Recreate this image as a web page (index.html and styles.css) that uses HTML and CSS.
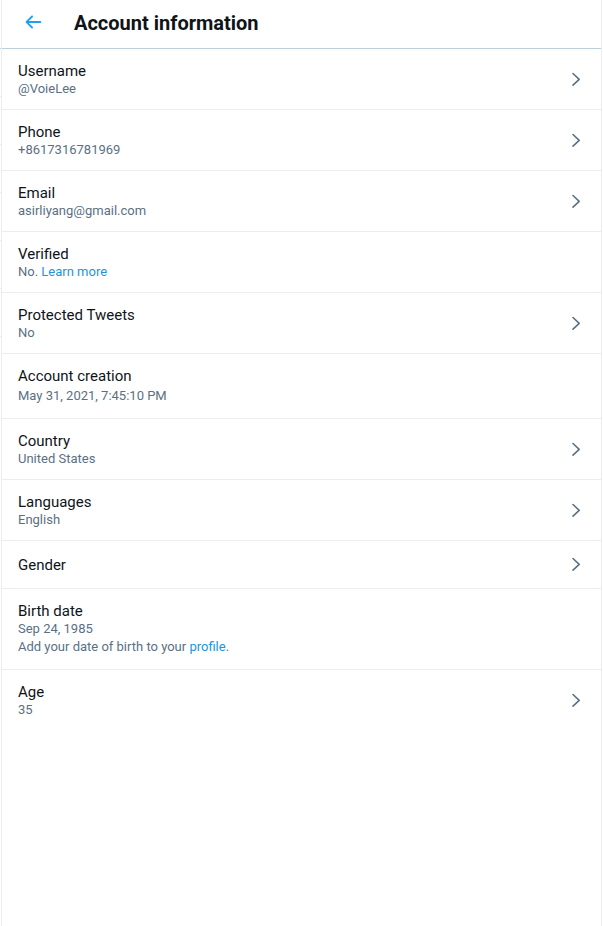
FILE: index.html
```html
<!DOCTYPE html>
<html lang="en">
<head>
<meta charset="utf-8">
<title>Account information</title>
<link rel="stylesheet" href="styles.css">
</head>
<body>
<svg class="defs" aria-hidden="true"><symbol id="chevron" viewBox="0 0 20 20"><path d="M8 3.5 14.2 9.3 8 15.1" fill="none" stroke="currentColor" stroke-width="1.6" stroke-linecap="round" stroke-linejoin="round"/></symbol></svg>
<div class="layout">
  <div class="edge"></div>
  <main class="panel">
    <header class="header">
      <button class="back" type="button" aria-label="Back"><svg viewBox="0 0 24 24" aria-hidden="true"><path d="M20 11H7.414l4.293-4.293c.39-.39.39-1.023 0-1.414s-1.023-.39-1.414 0l-6 6c-.39.39-.39 1.023 0 1.414l6 6c.195.195.45.293.707.293s.512-.098.707-.293c.39-.39.39-1.023 0-1.414L7.414 13H20c.553 0 1-.447 1-1s-.447-1-1-1z"/></svg></button>
      <h1 class="title">Account information</h1>
    </header>
    <a class="row" href="#username"><span class="text"><span class="label">Username</span><span class="value">@VoieLee</span></span><svg class="chevron"><use href="#chevron"/></svg></a>
    <a class="row" href="#phone"><span class="text"><span class="label">Phone</span><span class="value">+8617316781969</span></span><svg class="chevron"><use href="#chevron"/></svg></a>
    <a class="row" href="#email"><span class="text"><span class="label">Email</span><span class="value">asirliyang@gmail.com</span></span><svg class="chevron"><use href="#chevron"/></svg></a>
    <div class="row"><div class="text"><span class="label">Verified</span><span class="value">No. <a class="link" href="#verified">Learn more</a></span></div></div>
    <a class="row" href="#protected"><span class="text"><span class="label">Protected Tweets</span><span class="value">No</span></span><svg class="chevron"><use href="#chevron"/></svg></a>
    <div class="row"><div class="text spaced"><span class="label">Account creation</span><span class="value">May 31, 2021, 7:45:10 PM</span></div></div>
    <a class="row" href="#country"><span class="text"><span class="label">Country</span><span class="value">United States</span></span><svg class="chevron"><use href="#chevron"/></svg></a>
    <a class="row" href="#languages"><span class="text"><span class="label">Languages</span><span class="value">English</span></span><svg class="chevron"><use href="#chevron"/></svg></a>
    <a class="row single" href="#gender"><span class="text"><span class="label">Gender</span></span><svg class="chevron"><use href="#chevron"/></svg></a>
    <div class="row birth"><div class="text"><span class="label">Birth date</span><span class="value">Sep 24, 1985</span><span class="value">Add your date of birth to your <a class="link" href="#profile">profile</a>.</span></div></div>
    <a class="row" href="#age"><span class="text"><span class="label">Age</span><span class="value">35</span></span><svg class="chevron"><use href="#chevron"/></svg></a>
  </main>
  <div></div>
</div>
</body>
</html>
```
FILE: styles.css
```css
* { box-sizing: border-box; }
body { margin: 0; background: #fff; color: #0f1419; font-family: Roboto, "Liberation Sans", sans-serif; }
.defs { display: none; }
.layout { display: grid; grid-template-columns: 1px minmax(0, 1fr) 1px; min-height: 100vh; }
/* Dividers of the neighbouring column show along the left edge */
.edge { height: 337px; background: linear-gradient(#c4d2dc, #c4d2dc) 0 48px / 1px 1px no-repeat, linear-gradient(#fff, #fff) 0 0 / 1px 96px no-repeat, repeating-linear-gradient(#ebeef0 0 1px, #fff 1px 48px); }
.panel { border: solid #ebeef0; border-width: 0 1px; }
.header { display: flex; align-items: center; height: 49px; padding: 0 16px 3px; border-bottom: 1px solid #bdcfd8; }
.back { display: flex; align-items: center; width: 56px; height: 30px; padding: 0 4px 1px; border: 0; background: none; color: #1da1f2; cursor: pointer; }
.back svg { width: 22px; height: 22px; fill: currentColor; }
.title { margin: 0; font-size: 20px; line-height: 24px; font-weight: 700; }
.row { display: flex; align-items: center; justify-content: space-between; padding: 12px 16px 11px; border-bottom: 1px solid #ebeef0; color: inherit; text-decoration: none; }
.row:last-child { border-bottom: 0; }
.single { padding: 14px 16px 13px; }
.birth { padding-bottom: 13px; }
.text { display: flex; flex-direction: column; }
.spaced { gap: 2px; padding-bottom: 2px; }
.label { font-size: 15px; line-height: 20px; }
.value { font-size: 13px; line-height: 18px; color: #5b7083; }
.label + .value { margin-top: -1px; }
.link { color: #1b95e0; text-decoration: none; }
.chevron { width: 20px; height: 20px; color: #5b7083; }
```
